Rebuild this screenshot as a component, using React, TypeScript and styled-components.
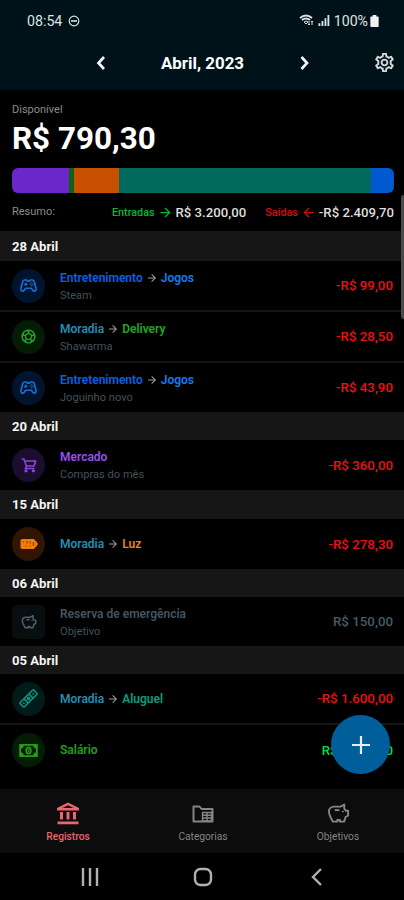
import React from "react";
import styled, { createGlobalStyle } from "styled-components";
import {
  MdArrowBack,
  MdArrowForward,
  MdOutlineSettings,
  MdSportsSoccer,
} from "react-icons/md";

const GlobalStyle = createGlobalStyle`
  * { box-sizing: border-box; }
  body { margin: 0; background: #000; font-family: Roboto, "Liberation Sans", sans-serif; overflow: hidden; }
  svg { display: block; flex: none; }
`;

const Screen = styled.div`
  position: relative;
  width: 404px;
  height: 900px;
  overflow: hidden;
  display: flex;
  flex-direction: column;
  background: #000;
  color: #f2f2f2;
`;

const Header = styled.header`
  height: 90px;
  flex: none;
  background: #001219;
`;

const StatusBar = styled.div`
  display: flex;
  align-items: center;
  justify-content: space-between;
  height: 41px;
  padding: 0 25px 0 27px;
  color: #dde1e3;
  font-size: 14.2px;
`;

const StatusGroup = styled.div<{ $gap: number }>`
  display: flex;
  align-items: center;
  gap: ${(p) => p.$gap}px;
`;

const MonthBar = styled.div`
  display: grid;
  grid-template-columns: 90px 22px 181px 22px 1fr;
  align-items: center;
  height: 43px;
`;

const Month = styled.h1`
  margin: 0;
  text-align: center;
  font-size: 16.9px;
  line-height: 20px;
  font-weight: 700;
  color: #fff;
`;

const GearSlot = styled.div`
  justify-self: end;
  margin: -1px 8px 0 0;
`;

const Summary = styled.section`
  height: 141px;
  flex: none;
  padding: 13px 10px 0 12px;
`;

const Caption = styled.div`
  font-size: 11px;
  line-height: 14px;
  color: #8b8b8b;
`;

const Balance = styled.div`
  font-size: 31.4px;
  line-height: 38px;
  height: 38px;
  margin-top: 3px;
  font-weight: 700;
  color: #fff;
  white-space: nowrap;
`;

const Distribution = styled.div`
  display: flex;
  height: 25px;
  margin-top: 10px;
  border-radius: 6px;
  overflow: hidden;
`;

const Segment = styled.div<{ $color: string; $share: number }>`
  flex: ${(p) => p.$share} 0 0;
  background: ${(p) => p.$color};
`;

const Totals = styled.div`
  display: flex;
  align-items: center;
  margin-top: 11px;
  height: 16px;
`;

const Total = styled.div<{ $color: string; $start?: boolean }>`
  display: flex;
  align-items: center;
  gap: 3px;
  white-space: nowrap;
  font-size: 10.8px;
  font-weight: 500;
  color: ${(p) => p.$color};
  margin-left: ${(p) => (p.$start ? "auto" : "19px")};
`;

const TotalValue = styled.span`
  font-size: 13.2px;
  font-weight: 500;
  color: #dedede;
`;

const DayTitle = styled.h2<{ $height: number }>`
  flex: none;
  margin: 0;
  height: ${(p) => p.$height}px;
  padding-left: 12px;
  display: flex;
  align-items: center;
  background: #161616;
  font-size: 13.1px;
  font-weight: 700;
  color: #f4f4f4;
`;

const Row = styled.div<{ $height: number; $divided?: boolean }>`
  flex: none;
  display: flex;
  align-items: center;
  height: ${(p) => p.$height}px;
  padding: 0 11px 0 12px;
  border-bottom: ${(p) => (p.$divided ? "2px solid #151515" : "0")};
`;

const Badge = styled.div<{ $bg: string; $color: string; $square?: boolean }>`
  display: flex;
  align-items: center;
  justify-content: center;
  width: 33px;
  height: 34px;
  flex: none;
  border-radius: ${(p) => (p.$square ? "5px" : "50%")};
  background: ${(p) => p.$bg};
  color: ${(p) => p.$color};
`;

const Labels = styled.div`
  margin-left: 15px;
  flex: 1;
`;

const CategoryLine = styled.div<{ $noted: boolean }>`
  display: flex;
  align-items: center;
  gap: 3px;
  padding-top: ${(p) => (p.$noted ? 1 : 0)}px;
  font-size: 12px;
  line-height: 16px;
  font-weight: 600;
  color: #9b9b9b;
  white-space: nowrap;
`;

const Tinted = styled.span<{ $color: string }>`
  color: ${(p) => p.$color};
`;

const Note = styled.div`
  margin-top: 2px;
  font-size: 11.1px;
  line-height: 15px;
  color: #43525a;
`;

const Amount = styled.div<{ $color: string }>`
  font-size: 13.3px;
  font-weight: 500;
  color: ${(p) => p.$color};
  white-space: nowrap;
`;

const TabBar = styled.nav`
  margin-top: auto;
  flex: none;
  display: grid;
  grid-template-columns: repeat(3, 135px);
  height: 64px;
  background: #0c0c0c;
`;

const Tab = styled.div<{ $active?: boolean }>`
  display: flex;
  flex-direction: column;
  align-items: center;
  gap: 5px;
  padding: 13px 0 0 1px;
  font-size: 10.2px;
  line-height: 14px;
  color: ${(p) => (p.$active ? "#e86770" : "#858585")};
  font-weight: ${(p) => (p.$active ? 500 : 400)};
`;

const TabIcon = styled.div`
  height: 23px;
  display: grid;
  place-items: center;
`;

const SystemBar = styled.div`
  flex: none;
  height: 47px;
  display: grid;
  grid-template-columns: repeat(3, 113.5px);
  padding-left: 33px;
  place-items: center;
  color: #b0b0b0;
`;

const AddButton = styled.button`
  position: absolute;
  right: 14px;
  bottom: 126px;
  width: 59px;
  height: 59px;
  padding: 0;
  border: 0;
  border-radius: 50%;
  background: #005f9a;
  color: #e8eef5;
  display: grid;
  place-items: center;
`;

const ScrollThumb = styled.div`
  position: absolute;
  right: 0;
  top: 195px;
  width: 3px;
  height: 124px;
  border-radius: 3px 0 0 3px;
  background: #4b4b4b;
`;

const Icon = ({ size = 20, w = 1.8, children }: { size?: number; w?: number; children: React.ReactNode }) => (
  <svg width={size} height={size} viewBox="0 0 24 24" fill="none" stroke="currentColor" strokeWidth={w} strokeLinejoin="round">
    {children}
  </svg>
);

const Gamepad = () => (
  <Icon size={19} w={2.1}>
    <path d="M7.3 5h2.2l1.2 1.5h2.6L14.5 5h2.2c1.3 0 2.2.8 2.6 2.1l2.2 8.6c.9 3.2-2.2 4.4-3.9 2.5L15.6 15.5H8.4l-2 2.7c-1.7 1.9-4.8.7-3.9-2.5l2.2-8.6C5.1 5.8 6 5 7.3 5Z" />
    <path d="M8.6 8.3v4.4M6.4 10.5h4.4M13.7 10.5h1.5M17 10.5h1.5M16.1 8v1.5M16.1 11.8v1.5" strokeWidth="1.7" />
  </Icon>
);

const Cart = () => (
  <Icon size={16} w={2.4}>
    <path d="M1 3h3.3l3.8 10.5h11.5L22 6H5.3M8.1 13.5 6.5 17.3H20" />
    <circle cx="7.5" cy="20.8" r="1.3" />
    <circle cx="18.5" cy="20.8" r="1.3" />
  </Icon>
);

const Battery = () => (
  <svg width="18" height="12" viewBox="0 0 18 12">
    <path fill="currentColor" d="M2 1h12l1.500 2h.500l2 3-2 3h-.500L14 11H2L.500 10V2Z" />
    <path d="M3.500 3.500v1M7 3v2.500M6 7.500v1M10 3.500v2M9.500 8h1M13.500 4v4" stroke="#7a3c00" strokeWidth="1" />
  </svg>
);

const Ruler = () => (
  <Icon size={21} w={1.7}>
    <g transform="rotate(-45 12 12)">
      <rect x="1" y="8.6" width="22" height="6.8" rx="1" />
      <path d="M8 8.6v6.8M16 8.6v6.8M4.500 11v2M19.500 11v2" />
      <circle cx="12" cy="12" r="1.2" />
    </g>
  </Icon>
);

const Cash = () => (
  <svg width="19" height="13" viewBox="0 0 20 14" fill="none" stroke="currentColor" strokeWidth="2">
    <path d="M1 1h18v12H1Z" />
    <ellipse cx="10" cy="7" rx="2.4" ry="3.4" />
    <path d="M10 5.500v3" strokeWidth="1" />
    <path d="M1 5c2.500 0 4-1.500 4-4H1ZM19 5c-2.500 0-4-1.500-4-4h4ZM1 9c2.500 0 4 1.500 4 4H1ZM19 9c-2.500 0-4 1.500-4 4h4Z" fill="currentColor" strokeWidth=".3" />
  </svg>
);

const Piggy = ({ size, w = 2 }: { size: number; w?: number }) => (
  <Icon size={size} w={w}>
    <path d="M7.500 4.800h6.800L18 2.600v4.200l1.600 2.400H22v5l-2.500 1.200-1.600 5.100h-4.400v-1.800h-2.800v1.800H6.100C4.300 17.200 2 12.600 2 9.800c0-2.800 2.400-5 5.500-5Z" />
    <path d="M8 8.500h5" />
    <circle cx="16.600" cy="10" r=".6" fill="currentColor" strokeWidth="1" />
  </Icon>
);

const Bank = () => (
  <svg width="22" height="23" viewBox="0 0 22 23" fill="currentColor">
    <path fillRule="evenodd" d="M11 .5 0 6v2.500h22V6ZM11 3.200 16.500 6h-11Z" />
    <path d="M3 10h3v7.500H3ZM9.500 10h3v7.500h-3ZM16 10h3v7.500h-3ZM.5 19.500h21v2.700H.5Z" />
  </svg>
);

const FolderTable = () => (
  <Icon size={24} w={2}>
    <path d="M2.500 4.500h6l2 2.500h11v12.500h-19Z" />
    <path d="M11.500 10.500h9v8.500h-9ZM11.500 13.300h9M11.500 16h9M16 10.500v8.500" strokeWidth="1.4" />
  </Icon>
);

const Chevron = ({ flip = false }: { flip?: boolean }) => (
  <svg width="22" height="18" viewBox="0 0 22 18" fill="none" stroke="#f5f5f5" strokeWidth="2.7">
    <path d={flip ? "m8.500 3 5.500 6-5.500 6" : "m14 3-5.500 6 5.500 6"} />
  </svg>
);

type Entry = {
  icon: React.ReactNode;
  bg: string;
  color: string;
  parent?: string;
  parentColor?: string;
  name: string;
  nameColor: string;
  note?: string;
  amount: string;
  amountColor?: string;
  height: number;
  divided?: boolean;
  square?: boolean;
};

const games = {
  icon: <Gamepad />,
  bg: "#00152d",
  color: "#176fd2",
  parent: "Entretenimento",
  parentColor: "#0860e8",
  name: "Jogos",
  nameColor: "#147df3",
};
const home = { parent: "Moradia", parentColor: "#238eb2" };

const days: { title: string; height: number; entries: Entry[] }[] = [
  {
    title: "28 Abril",
    height: 30,
    entries: [
      { ...games, note: "Steam", amount: "-R$ 99,00", height: 51, divided: true },
      { ...home, icon: <MdSportsSoccer size={17} />, bg: "#041b05", color: "#25a52b", name: "Delivery", nameColor: "#1aac22", note: "Shawarma", amount: "-R$ 28,50", height: 51, divided: true },
      { ...games, note: "Joguinho novo", amount: "-R$ 43,90", height: 49 },
    ],
  },
  {
    title: "20 Abril",
    height: 28,
    entries: [{ icon: <Cart />, bg: "#1b0d2d", color: "#8b46dc", name: "Mercado", nameColor: "#9850ed", note: "Compras do mês", amount: "-R$ 360,00", height: 50 }],
  },
  {
    title: "15 Abril",
    height: 29,
    entries: [{ ...home, icon: <Battery />, bg: "#301600", color: "#f07b08", name: "Luz", nameColor: "#f6820b", amount: "-R$ 278,30", height: 50 }],
  },
  {
    title: "06 Abril",
    height: 28,
    entries: [{ icon: <Piggy size={16} w={2.2} />, bg: "#080d10", color: "#4b626f", name: "Reserva de emergência", nameColor: "#425661", note: "Objetivo", amount: "R$ 150,00", amountColor: "#465b67", height: 49, square: true }],
  },
  {
    title: "05 Abril",
    height: 28,
    entries: [
      { ...home, icon: <Ruler />, bg: "#001b19", color: "#079b84", name: "Aluguel", nameColor: "#079e82", amount: "-R$ 1.600,00", height: 51, divided: true },
      { icon: <Cash />, bg: "#041c04", color: "#269b1d", name: "Salário", nameColor: "#239f20", amount: "R$ 3.200,00", amountColor: "#09d948", height: 50 },
    ],
  },
];

export default function App() {
  return (
    <>
      <GlobalStyle />
      <Screen>
        <Header>
          <StatusBar>
            <StatusGroup $gap={6}>
              <span>08:54</span>
              <svg width="12" height="12" viewBox="0 0 12 12" fill="none" stroke="currentColor" strokeWidth="1.2">
                <circle cx="6" cy="6" r="4.8" />
                <path d="M3 6h6" strokeWidth="1.6" />
              </svg>
            </StatusGroup>
            <StatusGroup $gap={4}>
              <svg width="15" height="13" viewBox="0 0 15 13" fill="none" stroke="currentColor">
                <path d="M1 4q6-5 12 0M3 6q4-3 8 0" strokeWidth="2" />
                <path d="m5 8 2-1 2 1-2 2ZM10 7v4m-1-1 1 1 1-1M13 11V7m-1 1 1-1 1 1" />
              </svg>
              <svg width="12" height="11" viewBox="0 0 12 12" fill="currentColor">
                <path d="M0 9h2v3H0ZM3.300 6.500h2V12h-2ZM6.600 3.500h2V12h-2ZM9.800 0h2v12h-2Z" />
              </svg>
              <StatusGroup $gap={2}>
                <span>100%</span>
                <svg width="9" height="12" viewBox="0 0 9 13" fill="#f0f0f0">
                  <path d="M2.500 0h4v1.500H8q1 0 1 1V12q0 1-1 1H1q-1 0-1-1V2.500q0-1 1-1h1.500Z" />
                </svg>
              </StatusGroup>
            </StatusGroup>
          </StatusBar>
          <MonthBar>
            <span />
            <Chevron />
            <Month>Abril, 2023</Month>
            <Chevron flip />
            <GearSlot>
              <MdOutlineSettings size={23} color="#d5d9db" />
            </GearSlot>
          </MonthBar>
        </Header>

        <Summary>
          <Caption>Disponível</Caption>
          <Balance>R$ 790,30</Balance>
          <Distribution>
            <Segment $color="#6c27cb" $share={57} />
            <Segment $color="#116112" $share={4.5} />
            <Segment $color="#c75100" $share={45} />
            <Segment $color="#00695b" $share={252} />
            <Segment $color="#0059cf" $share={23} />
          </Distribution>
          <Totals>
            <Caption>Resumo:</Caption>
            <Total $color="#08b83d" $start>
              <span>Entradas</span>
              <MdArrowForward size={15} />
              <TotalValue>R$ 3.200,00</TotalValue>
            </Total>
            <Total $color="#d90b10">
              <span>Saídas</span>
              <MdArrowBack size={15} />
              <TotalValue>-R$ 2.409,70</TotalValue>
            </Total>
          </Totals>
        </Summary>

        {days.map((day) => (
          <React.Fragment key={day.title}>
            <DayTitle $height={day.height}>{day.title}</DayTitle>
            {day.entries.map((e, i) => (
              <Row key={i} $height={e.height} $divided={e.divided}>
                <Badge $bg={e.bg} $color={e.color} $square={e.square}>
                  {e.icon}
                </Badge>
                <Labels>
                  <CategoryLine $noted={Boolean(e.note)}>
                    {e.parent && (
                      <>
                        <Tinted $color={e.parentColor!}>{e.parent}</Tinted>
                        <MdArrowForward size={12} />
                      </>
                    )}
                    <Tinted $color={e.nameColor}>{e.name}</Tinted>
                  </CategoryLine>
                  {e.note && <Note>{e.note}</Note>}
                </Labels>
                <Amount $color={e.amountColor ?? "#e81216"}>{e.amount}</Amount>
              </Row>
            ))}
          </React.Fragment>
        ))}

        <TabBar>
          <Tab $active>
            <TabIcon><Bank /></TabIcon>
            <span>Registros</span>
          </Tab>
          <Tab>
            <TabIcon><FolderTable /></TabIcon>
            <span>Categorias</span>
          </Tab>
          <Tab>
            <TabIcon><Piggy size={23} /></TabIcon>
            <span>Objetivos</span>
          </Tab>
        </TabBar>
        <SystemBar>
          <svg width="18" height="18" viewBox="0 0 18 18" stroke="currentColor" strokeWidth="2.4">
            <path d="M2 0v18M9 0v18M16 0v18" />
          </svg>
          <svg width="20" height="20" viewBox="0 0 20 20" fill="none" stroke="currentColor" strokeWidth="2.4">
            <rect x="2" y="2" width="16" height="16" rx="5.500" />
          </svg>
          <svg width="12" height="18" viewBox="0 0 12 18" fill="none" stroke="currentColor" strokeWidth="2.4">
            <path d="m10 1-8 8 8 8" />
          </svg>
        </SystemBar>
        <ScrollThumb />
        <AddButton aria-label="+">
          <svg width="20" height="20" viewBox="0 0 20 20" stroke="currentColor" strokeWidth="2.2">
            <path d="M10 1v18M1 10h18" />
          </svg>
        </AddButton>
      </Screen>
    </>
  );
}
